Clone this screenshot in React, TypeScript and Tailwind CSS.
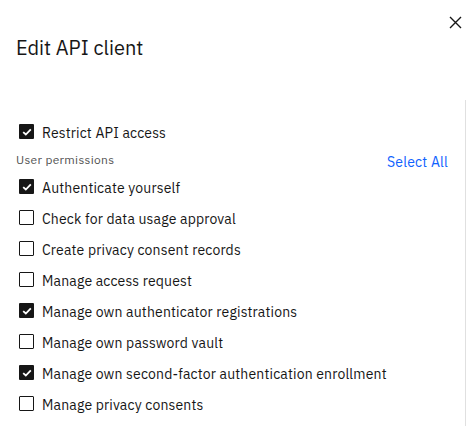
import React from "react";

const permissions: { label: string; checked: boolean }[] = [
  { label: "Authenticate yourself", checked: true },
  { label: "Check for data usage approval", checked: false },
  { label: "Create privacy consent records", checked: false },
  { label: "Manage access request", checked: false },
  { label: "Manage own authenticator registrations", checked: true },
  { label: "Manage own password vault", checked: false },
  { label: "Manage own second-factor authentication enrollment", checked: true },
  { label: "Manage privacy consents", checked: false },
  { label: "Manage privacy requests", checked: false },
];

function Box({ checked }: { checked: boolean }) {
  return (
    <span
      className={
        checked
          ? "flex items-center justify-center w-[15px] h-[15px] shrink-0 bg-[#161616] rounded-[1px]"
          : "flex items-center justify-center w-[15px] h-[15px] shrink-0 border border-[#161616] bg-white rounded-[1px]"
      }
    >
      {checked && (
        <svg width="10" height="8" viewBox="0 0 10 8" fill="none">
          <path d="M1.2 4.1 L3.8 6.5 L8.8 1.3" stroke="white" strokeWidth="1.8" />
        </svg>
      )}
    </span>
  );
}

function Row({ label, checked }: { label: string; checked: boolean }) {
  return (
    <label className="flex items-center h-[31px] pl-[19px] gap-[8px] text-[14px] tracking-[0.16px] text-[#161616]">
      <Box checked={checked} />
      <span className="leading-[18px] pt-[2px]">{label}</span>
    </label>
  );
}

export default function App() {
  return (
    <div
      className="w-[467px] h-[426px] overflow-hidden bg-white relative"
      style={{ fontFamily: "'IBM Plex Sans', 'Liberation Sans', Arial, sans-serif" }}
    >
      <div className="pt-[34px] pl-[16px]">
        <h2 className="text-[20px] leading-[28px] text-[#161616] font-normal">Edit API client</h2>
      </div>
      <button className="absolute top-[10px] right-0 w-[24px] h-[24px] flex items-center justify-center text-[#161616]">
        <svg width="13" height="13" viewBox="0 0 13 13" fill="none">
          <path d="M1 1 L12 12 M12 1 L1 12" stroke="currentColor" strokeWidth="1.4" />
        </svg>
      </button>
      <div className="mt-[38px] mr-[1px] border-r border-[#e0e0e0] h-[400px] pt-[16px]">
        <Row label="Restrict API access" checked={true} />
        <div className="flex items-end justify-between h-[24px] pl-[16px] pr-[17px]">
          <span className="text-[12px] leading-[16px] tracking-[0.32px] text-[#525252] pb-[3px]">User permissions</span>
          <span className="text-[14px] leading-[18px] tracking-[0.2px] text-[#0f62fe]">Select All</span>
        </div>
        {permissions.map((p) => (
          <Row key={p.label} label={p.label} checked={p.checked} />
        ))}
      </div>
    </div>
  );
}
